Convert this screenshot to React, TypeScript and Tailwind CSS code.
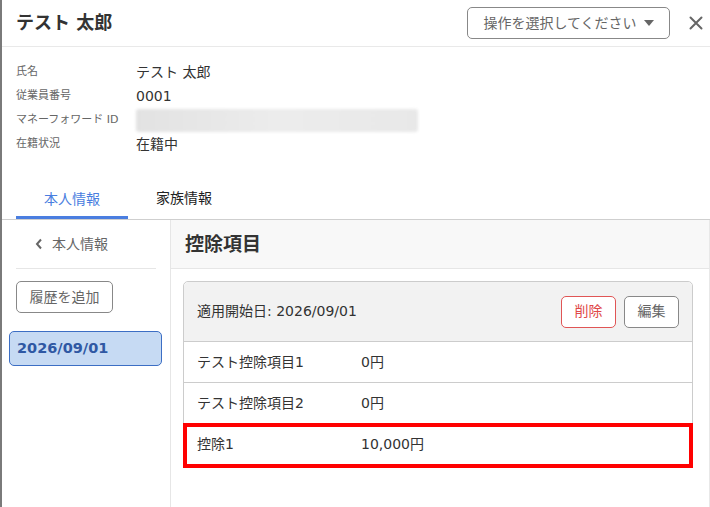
import React from "react";

const jp = { fontFamily: '"DejaVu Sans", "Noto Sans CJK JP", sans-serif' };

const infoRows: { label: string; value: React.ReactNode }[] = [
  { label: "氏名", value: "テスト 太郎" },
  { label: "従業員番号", value: "0001" },
  {
    label: "マネーフォワード ID",
    value: (
      <div className="h-[23px] w-[282px] rounded-[3px] bg-gradient-to-r from-[#e2e2e2] via-[#ececec] to-[#e8e8e8] blur-[1.5px]" />
    ),
  },
  { label: "在籍状況", value: "在籍中" },
];

const deductions = [
  { name: "テスト控除項目1", amount: "0円" },
  { name: "テスト控除項目2", amount: "0円" },
  { name: "控除1", amount: "10,000円", marked: true },
];

export default function App() {
  return (
    <div className="flex h-[507px] w-[710px] overflow-hidden bg-white text-[#333]" style={jp}>
      {/* backdrop edge */}
      <div className="w-[2px] shrink-0 bg-[#7a7a7a]" />

      <div className="flex min-w-0 flex-1 flex-col">
        {/* title bar */}
        <div className="flex h-[47px] shrink-0 items-center border-b border-[#e9e9e9] pl-[14px] pr-[6px]">
          <h1 className="flex-1 text-[18px] font-bold leading-none text-[#333]">テスト 太郎</h1>
          <button className="flex h-[32px] w-[203px] items-center justify-center gap-[7px] rounded-[5px] border border-[#888] text-[14px] text-[#666]">
            <span>操作を選択してください</span>
            <svg width="10" height="6" viewBox="0 0 10 6">
              <path d="M0 0 H10 L5 6 Z" fill="#666" />
            </svg>
          </button>
          <button className="ml-[18px] flex h-[20px] w-[16px] items-center justify-center">
            <svg width="14" height="14" viewBox="0 0 14 14">
              <path d="M1.5 1.5 L12.5 12.5 M12.5 1.5 L1.5 12.5" stroke="#666" strokeWidth="2" strokeLinecap="round" />
            </svg>
          </button>
        </div>

        {/* employee summary */}
        <div className="flex flex-col pl-[14px] pt-[13px]">
          {infoRows.map((r) => (
            <div key={r.label} className="flex h-[24px] items-center">
              <div className="w-[120px] pt-[1px] text-[11px] text-[#666]">{r.label}</div>
              <div className="text-[14px] text-[#333]">{r.value}</div>
            </div>
          ))}
        </div>

        {/* tabs */}
        <div className="mt-[24px] flex h-[40px] shrink-0 border-b border-[#cfcfcf] pl-[14px]">
          <div className="flex w-[112px] items-center justify-center border-b-[3px] border-[#4a7ee0] pt-[3px] text-[14px] text-[#4a7ee0]">
            本人情報
          </div>
          <div className="flex w-[112px] items-center justify-center pb-[3px] text-[14px] text-[#222]">
            家族情報
          </div>
        </div>

        {/* body */}
        <div className="flex min-h-0 flex-1">
          {/* history sidebar */}
          <div className="flex w-[169px] shrink-0 flex-col border-r border-[#e6e6e6]">
            <div className="mx-[14px] flex h-[49px] items-center border-b border-[#e6e6e6] pl-[19px] text-[14px] text-[#666]">
              <svg width="8" height="12" viewBox="0 0 8 12" className="mr-[9px]">
                <path d="M6 1.5 L2 6 L6 10.5" stroke="#666" strokeWidth="2" fill="none" />
              </svg>
              本人情報
            </div>
            <button className="ml-[14px] mt-[12px] flex h-[32px] w-[97px] items-center justify-center rounded-[5px] border border-[#888] text-[14px] text-[#666]">
              履歴を追加
            </button>
            <div className="ml-[7px] mt-[18px] flex h-[35px] w-[153px] items-center rounded-[5px] border border-[#3c6ec4] bg-[#c6daf3] pl-[7px] pt-[1px] text-[14.5px] font-bold text-[#2f58a3]">
              2026/09/01
            </div>
          </div>

          {/* deductions panel */}
          <div className="flex min-w-0 flex-1 flex-col border-r border-[#e8e8e8]">
            <div className="flex h-[49px] shrink-0 items-center border-b border-[#e6e6e6] bg-[#f8f8f8] pl-[14px]">
              <h2 className="text-[19px] font-bold text-[#333]">控除項目</h2>
            </div>

            <div className="ml-[12px] mr-[16px] mt-[12px] rounded-[5px] border border-[#cccccc]">
              <div className="flex h-[60px] items-center rounded-t-[5px] border-b border-[#cccccc] bg-[#f2f2f2] pl-[13px] pr-[13px]">
                <div className="flex-1 text-[14px] text-[#333]">適用開始日: 2026/09/01</div>
                <button className="flex h-[32px] w-[55px] items-center justify-center rounded-[5px] border border-[#e05555] bg-white text-[14px] text-[#e04848]">
                  削除
                </button>
                <button className="ml-[8px] flex h-[32px] w-[55px] items-center justify-center rounded-[5px] border border-[#888] bg-white text-[14px] text-[#666]">
                  編集
                </button>
              </div>
              {deductions.map((d, i) => (
                <div
                  key={d.name}
                  className={`relative flex h-[41px] items-center pl-[13px] text-[14px] text-[#333] ${
                    i < deductions.length - 1 ? "border-b border-[#cccccc]" : ""
                  }`}
                >
                  <div className="w-[164px]">{d.name}</div>
                  <div>{d.amount}</div>
                  {d.marked && (
                    <div className="pointer-events-none absolute -bottom-[3px] -left-[1px] -right-[1px] -top-[1px] border-4 border-[#ff0000]" />
                  )}
                </div>
              ))}
            </div>
          </div>
        </div>
      </div>
    </div>
  );
}
